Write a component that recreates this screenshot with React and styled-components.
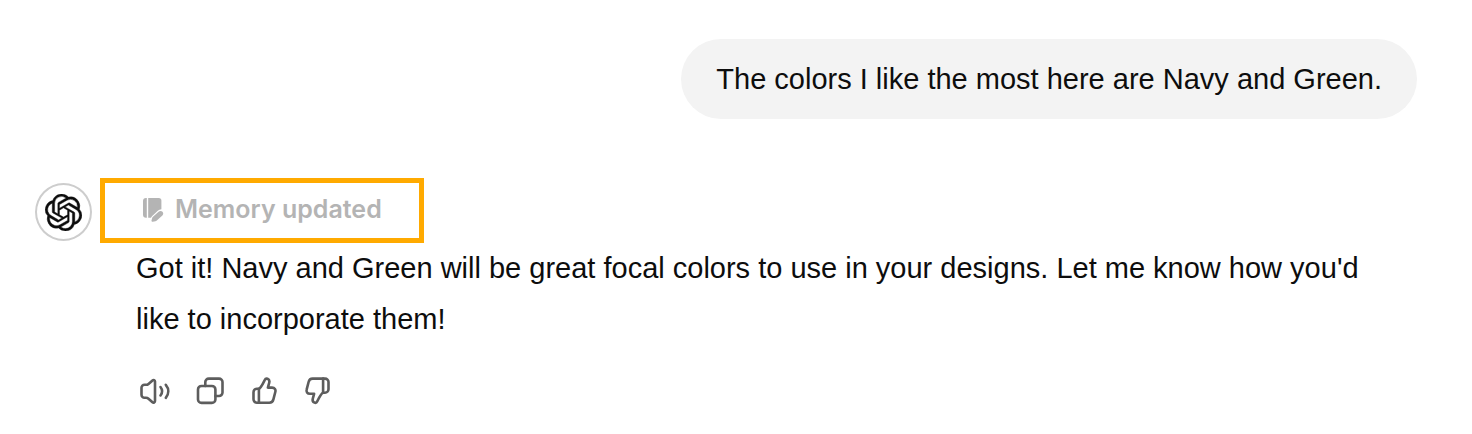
import React from 'react'
import styled, {createGlobalStyle} from 'styled-components'
import {SiOpenai} from 'react-icons/si'

/**
 * ICONS
 */
const MemoryIcon = () => (
  <svg width="22" height="26" viewBox="0 0 22 26" aria-hidden="true">
    <path fill="currentColor" d="M4.8 1v19.8H4a3 3 0 0 1-3-3V4a3 3 0 0 1 3-3z" />
    <path
      fill="currentColor"
      d="M6.2 1h10.6a2.6 2.6 0 0 1 2.6 2.6v8.6c-1.4.1-2.6.7-3.6 1.6l-5.6 5.1c-.6.6-1 1.2-1.3 1.9H6.2z"
    />
    <path
      fill="currentColor"
      d="M16.6 14.7c1.1-1 2.9-1 3.9.1s1 2.7-.1 3.7l-5.6 5c-.4.4-.9.6-1.4.7l-2.7.6c-.8.2-1.4-.5-1.2-1.2l.7-2.6c.1-.5.4-.9.8-1.3z"
    />
  </svg>
)

const SpeakerIcon = () => (
  <ActionSvg width="32" height="30" viewBox="0 0 32 30">
    <path d="M5.5 8.8H7c1 0 1.8-.3 2.5-.9l4-3.5c1-.9 2.5-.3 2.5 1.1v19.6c0 1.4-1.5 2-2.5 1.1l-4-3.5c-.7-.6-1.500-.9-2.500-.9H5.500a3 3 0 0 1-3-3v-7a3 3 0 0 1 3-3z" />
    <path d="M21.5 11c1.900 2.500 1.900 6 0 8.500M26.800 8.800c3.300 4 3.300 9 0 13" />
  </ActionSvg>
)

const CopyIcon = () => (
  <ActionSvg width="30" height="30" viewBox="0 0 30 30">
    <rect x="3" y="10" width="17.4" height="16.9" rx="3.5" />
    <path d="M10.3 10V6.1a3.5 3.5 0 0 1 3.5-3.5H24a3.5 3.5 0 0 1 3.5 3.5v10.4A3.5 3.5 0 0 1 24 20h-3.6" />
  </ActionSvg>
)

const ThumbIcon = ({down}) => (
  <ActionSvg width="30" height="30" viewBox="0 0 30 30">
    <g transform={down ? 'rotate(180 15 14.7)' : undefined}>
      <path d="M9.9 12.7c1.9-.5 3.3-3.5 5.7-8.4.8-1.7 1.7-2 2.9-1.5 1.7.7 2.2 2.2 1.7 4l-1.3 4.8H23c2.8 0 4 2 3.3 4.4l-1.9 7.4c-.6 2.4-1.8 3.4-4 3.4H8a3.5 3.5 0 0 1-3.5-3.5v-7.1A3.5 3.5 0 0 1 8 12.7z" />
      <path d="M9.9 12.7v14.1" />
    </g>
  </ActionSvg>
)

/**
 * COMPONENT
 */
const actions = [
  {label: 'Read aloud', icon: <SpeakerIcon />},
  {label: 'Copy', icon: <CopyIcon />},
  {label: 'Good response', icon: <ThumbIcon />},
  {label: 'Bad response', icon: <ThumbIcon down />}
]

const App = () => (
  <Chat>
    <GlobalStyle />
    <UserRow>
      <Bubble>The colors I like the most here are Navy and Green.</Bubble>
    </UserRow>
    <AssistantRow>
      <Avatar>
        <SiOpenai size={37} stroke="currentColor" strokeWidth="0.25" />
      </Avatar>
      <Reply>
        <MemoryNotice>
          <MemoryIcon />
          <span>Memory updated</span>
        </MemoryNotice>
        <Content>
          <Text>
            Got it! Navy and Green will be great focal colors to use in your
            designs. Let me know how you'd like to incorporate them!
          </Text>
          <Actions>
            {actions.map(({label, icon}) => (
              <ActionButton key={label} type="button" aria-label={label}>
                {icon}
              </ActionButton>
            ))}
          </Actions>
        </Content>
      </Reply>
    </AssistantRow>
  </Chat>
)

export default App

const GlobalStyle = createGlobalStyle`
  * {
    box-sizing: border-box;
  }

  body {
    margin: 0;
    background: #fff;
    color: #0d0d0d;
    font-family: 'Liberation Sans', Arial, sans-serif;
    font-size: 29px;
  }
`

const Chat = styled.main`
  display: flex;
  flex-direction: column;
  gap: 59px;
  padding: 39px 55px 27px 35px;
`

const UserRow = styled.div`
  display: flex;
  justify-content: flex-end;
`

const Bubble = styled.div`
  padding: 14px 35px;
  border-radius: 40px;
  background: #f3f3f3;
  line-height: 52px;
`

const AssistantRow = styled.div`
  display: flex;
  align-items: flex-start;
  gap: 8px;
`

const Avatar = styled.div`
  display: flex;
  flex: none;
  align-items: center;
  justify-content: center;
  width: 57px;
  height: 58px;
  margin-top: 5px;
  border: 2px solid #cdcdcd;
  border-radius: 50%;
`

const Reply = styled.div`
  flex: 1;
  min-width: 0;
`

const MemoryNotice = styled.div`
  display: inline-flex;
  align-items: center;
  gap: 11px;
  padding: 8px 37px 10px;
  border: 5px solid #ffaa00;
  color: #b4b4b4;
  font-family: Inter, 'Liberation Sans', sans-serif;
  font-size: 25px;
  font-weight: 600;
  line-height: 37px;
  vertical-align: top;
`

const Content = styled.div`
  padding: 0 36px;
`

const Text = styled.p`
  margin: 0;
  line-height: 51px;
`

const Actions = styled.div`
  display: flex;
  gap: 24px;
  margin-top: 31px;
  padding-left: 3px;
`

const ActionButton = styled.button`
  display: flex;
  padding: 0;
  border: none;
  background: none;
  color: #5d5d5d;
  cursor: pointer;
`

const ActionSvg = styled.svg`
  fill: none;
  stroke: currentColor;
  stroke-width: 2.6;
  stroke-linecap: round;
  stroke-linejoin: round;
`
